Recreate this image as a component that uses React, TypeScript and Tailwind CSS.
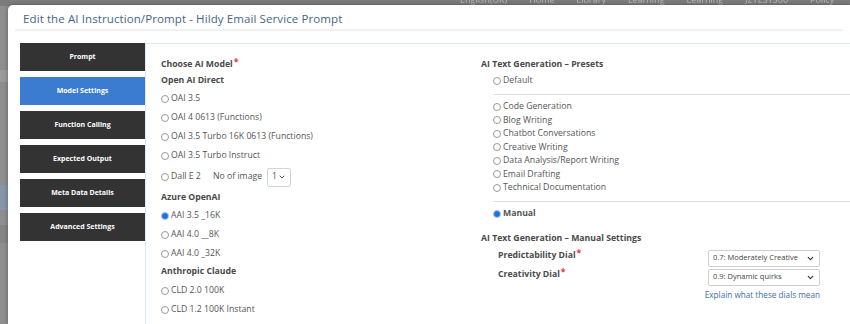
import { ChevronDown } from 'lucide-react';

const font = { fontFamily: '"Open Sans", "Liberation Sans", sans-serif' };

const tabs = [
  'Prompt',
  'Model Settings',
  'Function Calling',
  'Expected Output',
  'Meta Data Details',
  'Advanced Settings',
];

const presets = [
  'Code Generation',
  'Blog Writing',
  'Chatbot Conversations',
  'Creative Writing',
  'Data Analysis/Report Writing',
  'Email Drafting',
  'Technical Documentation',
];

const Radio = ({ checked = false }: { checked?: boolean }) =>
  checked ? (
    <span className="inline-block w-[8px] h-[8px] rounded-full bg-[#1f6fe0] border border-[#a9c8f3] mr-[2px] shrink-0" />
  ) : (
    <span className="inline-block w-[8px] h-[8px] rounded-full bg-white border border-[#9a9a9a] mr-[2px] shrink-0" />
  );

const RadioRow = ({ label, checked, h = 'h-[19px]' }: { label: string; checked?: boolean; h?: string }) => (
  <div className={`flex items-center ${h} text-[8.7px] text-[#555]`}>
    <Radio checked={checked} />
    <span>{label}</span>
  </div>
);

const Heading = ({ children, h = 'h-[17px]' }: { children: React.ReactNode; h?: string }) => (
  <div className={`flex items-center ${h} text-[8.7px] font-bold text-[#4a4a4a]`}>{children}</div>
);

const Req = () => <span className="text-[#e0334d] ml-[1px] relative -top-[2px]">*</span>;

export default function App() {
  return (
    <div className="relative w-[850px] h-[324px] overflow-hidden bg-[#8e8e8e]" style={font}>
      {/* page behind the modal */}
      <div className="absolute top-0 left-0 right-0 h-[6px] bg-[#7c7c7c] blur-[0.6px] overflow-hidden">
        <div className="flex gap-[22px] pl-[460px] -mt-[6px] text-[9px] leading-[12px] text-[#b9b9b9]">
          <span>English(UK)</span>
          <span>Home</span>
          <span>Library</span>
          <span>Learning Plan</span>
          <span>Learning History</span>
          <span>JZTEST500</span>
          <span>Policy</span>
          <span>Solo</span>
        </div>
      </div>
      <div className="absolute left-0 top-[70px] w-[8px] h-[12px] bg-[#9a9a9a]" />
      <div className="absolute left-0 top-[185px] w-[8px] h-[25px] bg-[#8795a8]" />
      <div className="absolute left-0 top-[225px] w-[8px] h-[18px] bg-[#858585]" />

      {/* modal */}
      <div className="absolute left-[8px] top-[5px] right-0 bottom-0 bg-white rounded-tl-[5px] shadow-[0_0_4px_rgba(0,0,0,0.35)]">
        <div className="h-[26px] mx-[7px] flex items-center pl-[8px] pt-[4px] border-b-2 border-[#f1f1f1]">
          <h1 className="text-[11.5px] text-[#45658a] tracking-[0.1px]">
            Edit the AI Instruction/Prompt - Hildy Email Service Prompt
          </h1>
        </div>

        <div className="flex pl-[12px] pt-[12px]">
          {/* tabs */}
          <div className="w-[125px] flex flex-col gap-[6px] shrink-0">
            {tabs.map((t) => (
              <div
                key={t}
                className={`h-[28px] flex items-center justify-center text-[7px] font-bold text-white ${
                  t === 'Model Settings' ? 'bg-[#3b7bd0]' : 'bg-[#333333]'
                }`}
              >
                {t}
              </div>
            ))}
          </div>

          {/* tab content */}
          <div className="flex-1 h-[290px] border-t border-l border-[#dbeaf1] flex pt-[12px]">
            <div className="w-[335px] pl-[15px] shrink-0">
              <Heading>
                Choose AI Model
                <Req />
              </Heading>
              <Heading h="h-[16px]">Open AI Direct</Heading>
              <RadioRow label="OAI 3.5" />
              <RadioRow label="OAI 4 0613 (Functions)" />
              <RadioRow label="OAI 3.5 Turbo 16K 0613 (Functions)" />
              <RadioRow label="OAI 3.5 Turbo Instruct" />
              <div className="flex items-center h-[24px] text-[8.7px] text-[#555]">
                <Radio />
                <span className="w-[42px]">Dall E 2</span>
                <span className="w-[54px]">No of image</span>
                <div className="h-[19px] w-[24px] border border-[#d4d4d4] rounded-[2px] flex items-center justify-center gap-[1px]">
                  <span>1</span>
                  <ChevronDown size={8} strokeWidth={3} />
                </div>
              </div>
              <Heading>Azure OpenAI</Heading>
              <RadioRow label="AAI 3.5 _16K" checked />
              <RadioRow label="AAI 4.0 __8K" />
              <RadioRow label="AAI 4.0 _32K" />
              <Heading h="h-[18px]">Anthropic Claude</Heading>
              <RadioRow label="CLD 2.0 100K" />
              <RadioRow label="CLD 1.2 100K Instant" />
            </div>

            <div className="flex-1">
              <Heading>AI Text Generation – Presets</Heading>
              <div className="pl-[12px]">
                <RadioRow label="Default" h="h-[16px]" />
                <div className="mt-[5px] border-t border-[#e2e2e2] pt-[5px] pb-[6px]">
                  {presets.map((p) => (
                    <RadioRow key={p} label={p} h="h-[13.5px]" />
                  ))}
                </div>
                <div className="border-t border-[#e2e2e2] pt-[3px]">
                  <div className="flex items-center h-[19px] text-[8.7px] font-bold text-[#555]">
                    <Radio checked />
                    <span>Manual</span>
                  </div>
                </div>
              </div>
              <div className="mt-[7px]">
                <Heading>AI Text Generation – Manual Settings</Heading>
              </div>
              <div className="pl-[17px] w-[339px] pt-[1px]">
                <div className="flex items-center h-[19px]">
                  <div className="w-[210px] text-[8.7px] font-bold text-[#4a4a4a] -mt-[4px]">
                    Predictability Dial
                    <Req />
                  </div>
                  <div className="w-[112px] h-[17px] border border-[#cfcfcf] rounded-[2px] flex items-center justify-between px-[4px] text-[7.5px] text-[#444]">
                    <span>0.7: Moderately Creative</span>
                    <ChevronDown size={9} strokeWidth={3} className="text-[#333]" />
                  </div>
                </div>
                <div className="flex items-center h-[19px]">
                  <div className="w-[210px] text-[8.7px] font-bold text-[#4a4a4a] -mt-[4px]">
                    Creativity Dial
                    <Req />
                  </div>
                  <div className="w-[112px] h-[17px] border border-[#cfcfcf] rounded-[2px] flex items-center justify-between px-[4px] text-[7.5px] text-[#444]">
                    <span>0.9: Dynamic quirks</span>
                    <ChevronDown size={9} strokeWidth={3} className="text-[#333]" />
                  </div>
                </div>
                <div className="w-[322px] h-[17px] flex items-center justify-end text-[8.2px] text-[#3f6ea6]">
                  Explain what these dials mean
                </div>
              </div>
            </div>
          </div>
        </div>
      </div>
    </div>
  );
}
